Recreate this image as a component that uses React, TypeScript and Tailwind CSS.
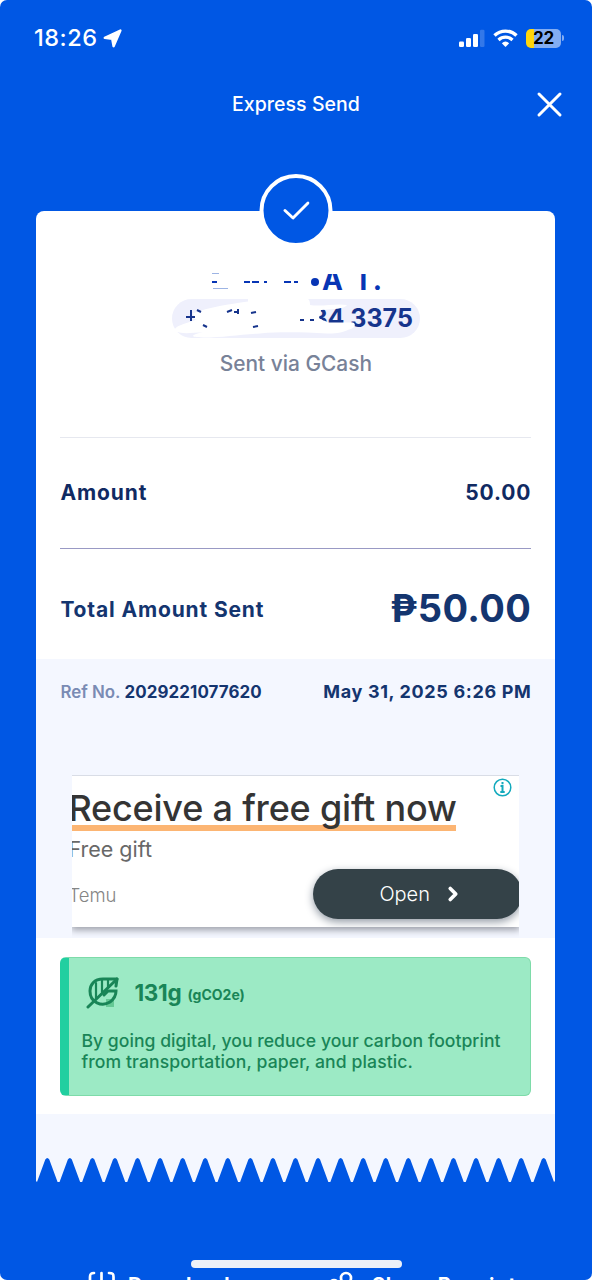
import { ChevronRight } from "lucide-react";

const TEETH = 23;
const TOOTH_W = 519 / TEETH;

function StatusBar() {
  return (
    <div className="flex h-[76px] shrink-0 items-center justify-between pl-[34px] pr-[28px]">
      <div className="flex items-center gap-[6px]">
        <span className="w-[63px] whitespace-nowrap font-['Inter'] text-[23.500px] font-medium leading-none tracking-[0.500px]">18:26</span>
        <svg width="19" height="19" viewBox="0 0 19 19" fill="currentColor" stroke="currentColor" strokeLinejoin="round">
          <path d="M1.800 8.800 17.400 1.600 10.600 17.200 9.200 9.800Z" strokeWidth="2.400" />
        </svg>
      </div>
      <div className="flex items-center">
        <svg width="27" height="19" viewBox="0 0 27 19" fill="currentColor">
          <rect x="0" y="12.500" width="5" height="5.500" rx="1.300" />
          <rect x="7" y="9" width="5" height="9" rx="1.300" />
          <rect x="14" y="5" width="5" height="13" rx="1.300" />
          <rect x="21" y="0.800" width="4.500" height="17.200" rx="1.300" opacity="0.200" />
        </svg>
        <svg className="ml-[7px]" width="25" height="19" viewBox="0 0 25 19" fill="none" stroke="currentColor">
          <path d="M1.500 6.500a16 16 0 0 1 22 0" strokeWidth="3.400" />
          <path d="M5.500 11a10.200 10.200 0 0 1 14 0" strokeWidth="3.200" />
          <path d="M8.800 14.200a5.600 5.600 0 0 1 7.400 0L12.500 18Z" fill="currentColor" stroke="none" />
        </svg>
        <div className="ml-[8px] flex h-[19px] w-[35px] items-center justify-center rounded-[5px] bg-[linear-gradient(90deg,#ffd60a_8px,#83adf2_8px)] font-['Inter'] text-[17px] font-bold leading-none tracking-[-0.3px] text-black">
          22
        </div>
        <div className="ml-px h-[6px] w-[2px] rounded-r-full bg-[#83adf2]" />
      </div>
    </div>
  );
}

function Recipient() {
  return (
    <div className="mx-[24px] flex h-[227px] flex-col items-center border-b border-[#e6e8ef] pt-[57px]">
      <div className="relative flex w-[248px] flex-col">
        <div className="flex h-[31px] items-start pl-[139px] font-['Inter'] text-[28px] font-bold leading-[25px] text-[#0735b5]">
          <svg className="mt-[10px] shrink-0" width="8" height="8" viewBox="0 0 8 8">
            <circle cx="4" cy="4" r="4" fill="#0735b5" />
          </svg>
          <span className="ml-[3px] w-[32px]">A</span>
          <span className="tracking-[1px]">T.</span>
        </div>
        <div className="flex h-[39px] items-center justify-end rounded-full bg-[#eff0fc] pr-[7px] font-['Inter'] text-[25px] font-bold leading-none text-[#16348c]">
          34 3375
        </div>
        <svg className="absolute left-0 top-0" width="248" height="70" viewBox="0 0 248 70" fill="none">
          <path d="M146 0h80v6h-80Z" fill="white" />
          <path d="M40 14h5M72 14h6m2 0h7m5 0h3m17 0h7m3 0h4" stroke="#0735b5" strokeWidth="2" />
          <path d="M41 20.500h15M40 5.500h7" stroke="#9db4e4" />
          <path d="M76 30h59c3 2 3 5 3 7 12 2 26-2 37 0-2 4-14 4-26 5l-2 8c3 3 6 2 9 4.500h25c4 2 1 6-4 7-8 4-15 4-22 4-23-1-44-2-67 0-20 1-37 4-57 4-17 0-9-4 0-5-10 0-20 2-27-1-4-4 3-6 21-12-5 0-2-3-4-6 18-7 35-9 55-12Z" fill="white" />
          <path d="M14 49h9m-4-7v11m6-11 4 2m2 13 4 2m20-15 5-2m2 2h5m-1-3v5m13-1 5-1m-3 15 5-1m42-6h4m6 0h4" stroke="#16348c" strokeWidth="2" />
        </svg>
      </div>
      <div className="mt-[13px] font-['Inter'] text-[20.900px] font-medium leading-[26px] text-[#788298]">Sent via GCash</div>
    </div>
  );
}

function AdBanner() {
  return (
    <div className="relative mx-auto h-[163px] w-[447px] overflow-hidden">
      <div className="h-[152px] border-t border-[#d9dde6] bg-white shadow-[0_2px_7px_1px_#9b9ea8]">
        <div className="-ml-[4px] w-[388px] whitespace-nowrap border-b-[6px] border-[#fcb573] pt-[15px] font-['Inter'] text-[36px] font-medium leading-[34px] tracking-[-0.200px] text-[#343434]">
          Receive a free gift now
        </div>
        <div className="-ml-[4px] mt-[4px] font-['Inter'] text-[21.500px] leading-[28px] text-[#686868]">Free gift</div>
        <div className="flex items-center justify-between">
          <span className="-ml-[4px] mt-[9px] font-['Inter'] text-[18.500px] font-light text-[#858585]">Temu</span>
          <div className="-mr-[3px] mt-[6px] flex h-[50px] w-[209px] items-center gap-[12px] rounded-full bg-[#344248] pl-[66px] font-['Inter'] text-[20px] font-light text-white shadow-[0_3px_9px_#939ba5]">
            Open
            <ChevronRight className="size-[22px]" strokeWidth={4} />
          </div>
        </div>
      </div>
      <svg className="absolute right-[7px] top-[3px]" width="19" height="19" viewBox="0 0 19 19" fill="none" stroke="#13aabd">
        <circle cx="9.500" cy="9.500" r="8.300" strokeWidth="1.500" />
        <path d="M9.500 4v2.300M7.500 8h2v6M7.300 14h4.400" strokeWidth="2" />
      </svg>
    </div>
  );
}

function Footprint() {
  return (
    <div className="mx-[24px] h-[139px] rounded-[6px] border border-l-[9px] border-[#7edba9] border-l-[#22cfa0] bg-[#9ceac5] pl-[12px] text-[#198557]">
      <div className="flex h-[70px] items-center">
        <svg className="ml-[5px]" width="34" height="34" viewBox="0 0 34 34" fill="none" stroke="currentColor" strokeLinecap="round">
          <path d="M20 23h8v8h-8Z" fill="#65c995" stroke="none" />
          <path d="M31 3H17C8 3 4 9 4 15c0 12 12 16 20 11 4-3 6-6 6-11h-8l-4 4" strokeWidth="3" />
          <path d="M2 31 31 3M31 3l-1 7" strokeWidth="3" />
          <path d="M10 7v15M16 4v12M22 3v8" strokeWidth="2.200" />
        </svg>
        <span className="ml-[14px] w-[48px] font-['Inter'] text-[22.500px] font-bold leading-none tracking-[-0.300px]">131g</span>
        <span className="ml-[5px] mt-[4px] font-['Inter'] text-[14px] font-bold leading-none">(gCO2e)</span>
      </div>
      <p className="mt-[2px] whitespace-nowrap font-['Inter'] text-[17.600px] font-medium leading-[21px] tracking-[0.030px]">
        By going digital, you reduce your carbon footprint
        <br />
        <span className="tracking-[0.100px]">from transportation, paper, and plastic.</span>
      </p>
    </div>
  );
}

function TornEdge() {
  const teeth = Array.from({ length: TEETH }, (_, i) => {
    const x = i * TOOTH_W;
    const mid = x + TOOTH_W / 2;
    return `L${x + 1} 24 L${mid - 2} 1.5 Q${mid} -1.5 ${mid + 2} 1.5 L${x + TOOTH_W - 1} 24`;
  }).join(" ");
  return (
    <svg className="block" width="519" height="25" viewBox="0 0 519 25">
      <path d={`M0 0 L0 23 ${teeth} L519 23 L519 0Z`} fill="#f4f7ff" />
    </svg>
  );
}

export default function App() {
  return (
    <div className="h-[1280px] w-[592px] overflow-hidden bg-white">
      <div className="relative flex h-[1280px] flex-col overflow-hidden rounded-[7px] bg-[#0057e4] text-white">
        <StatusBar />
        <header className="grid h-[56px] shrink-0 grid-cols-[1fr_auto_1fr] items-center pr-[29px]">
          <h1 className="col-start-2 ml-[29px] mt-[2px] font-['Inter'] text-[19.500px] font-medium leading-none tracking-[0.050px]">Express Send</h1>
          <svg className="justify-self-end" width="27" height="27" viewBox="0 0 27 27" stroke="currentColor" strokeWidth="3" strokeLinecap="round">
            <path d="m3 3 21 21M24 3 3 24" />
          </svg>
        </header>

        <main className="relative ml-[36.400px] mt-[79px] w-[519px] shrink-0">
          <div className="absolute left-1/2 top-[-37px] flex size-[73px] -translate-x-1/2 items-center justify-center rounded-full border-[4.500px] border-white bg-[#0057e4]">
            <svg width="27" height="19" viewBox="0 0 27 19" fill="none" stroke="white" strokeWidth="2.900" strokeLinecap="round" strokeLinejoin="round">
              <path d="m2.500 9.500 8 7.500L25.500 2" />
            </svg>
          </div>

          <section className="h-[448px] rounded-t-[8px] bg-white text-[#102a62]">
            <Recipient />
            <div className="mx-[24px] flex h-[111px] items-center justify-between border-b border-[#9999c4] pr-px font-['Inter'] text-[21px] font-bold">
              <span className="tracking-[0.900px]">Amount</span>
              <span className="-mr-px tracking-[0.900px]">50.00</span>
            </div>
            <div className="mx-[24px] flex h-[110px] items-center justify-between pt-[10px] font-['Inter'] text-[21px] font-bold text-[#14356f]">
              <span className="mt-[2px] tracking-[0.850px]">Total Amount Sent</span>
              <span className="-mt-[2px] text-[38px] leading-none tracking-[0.400px]">₱50.00</span>
            </div>
          </section>

          <section className="h-[279px] bg-[#f4f7ff]">
            <div className="mx-[24px] flex h-[116px] items-start justify-between pt-[21px] font-['Inter'] text-[16.900px] font-bold leading-[24px] text-[#14356f]">
              <span>
                <span className="font-semibold text-[#7a8bb4]">Ref No.</span> <span className="tracking-[0.100px]">2029221077620</span>
              </span>
              <span className="text-[18px] tracking-[0.650px]">May 31, 2025 6:26 PM</span>
            </div>
            <AdBanner />
          </section>

          <section className="h-[176px] bg-white pt-[19px]">
            <Footprint />
          </section>
          <div className="h-[44px] bg-[#f4f7ff]" />
          <TornEdge />
        </main>

        <footer className="flex shrink-0 items-start pl-[86px] pt-[88px] font-['Inter'] text-[20px] font-bold leading-[24px]">
          <svg width="30" height="28" viewBox="0 0 30 28" fill="none" stroke="currentColor" strokeWidth="2.700" strokeLinecap="round">
            <path d="M8 2C4.500 2 4 3 4 6v16M15.500 2v16M23 2c4 0 4.500 1 4.500 4v16" />
          </svg>
          <span className="ml-[12px] mt-[2px] w-[200px] tracking-[0.500px]">Download</span>
          <svg width="32" height="28" viewBox="0 0 32 28" fill="none" stroke="currentColor" strokeWidth="2.700">
            <circle cx="18" cy="7" r="5" />
            <circle cx="6" cy="13" r="4" />
          </svg>
          <span className="ml-[12px] mt-[2px] tracking-[0.700px]">Share Receipt</span>
        </footer>
        <div className="absolute left-[191px] top-[1260px] h-[8px] w-[211px] rounded-full bg-[#edf1f8]" />
      </div>
    </div>
  );
}
